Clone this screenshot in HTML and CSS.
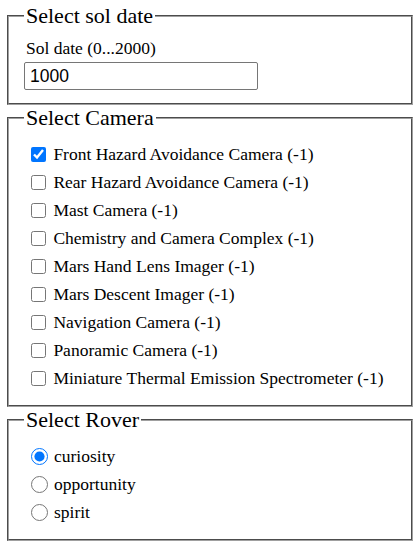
FILE: index.html
```html
<!DOCTYPE html>
<html>
<head>
<meta charset="utf-8">
<link rel="stylesheet" href="styles.css">
</head>
<body>
<fieldset class="box">
  <legend class="title">Select sol date</legend>
  <label class="field-label" for="sol">Sol date (0...2000)</label>
  <input class="text-input" id="sol" type="text" value="1000">
</fieldset>
<fieldset class="box">
  <legend class="title">Select Camera</legend>
  <label class="row"><input class="check" type="checkbox" checked> Front Hazard Avoidance Camera (-1)</label>
  <label class="row"><input class="check" type="checkbox"> Rear Hazard Avoidance Camera (-1)</label>
  <label class="row"><input class="check" type="checkbox"> Mast Camera (-1)</label>
  <label class="row"><input class="check" type="checkbox"> Chemistry and Camera Complex (-1)</label>
  <label class="row"><input class="check" type="checkbox"> Mars Hand Lens Imager (-1)</label>
  <label class="row"><input class="check" type="checkbox"> Mars Descent Imager (-1)</label>
  <label class="row"><input class="check" type="checkbox"> Navigation Camera (-1)</label>
  <label class="row"><input class="check" type="checkbox"> Panoramic Camera (-1)</label>
  <label class="row"><input class="check" type="checkbox"> Miniature Thermal Emission Spectrometer (-1)</label>
</fieldset>
<fieldset class="box">
  <legend class="title">Select Rover</legend>
  <label class="row"><input class="radio" type="radio" name="rover" checked>curiosity</label>
  <label class="row"><input class="radio" type="radio" name="rover">opportunity</label>
  <label class="row"><input class="radio" type="radio" name="rover">spirit</label>
</fieldset>
</body>
</html>
```

FILE: styles.css
```css
body {
  margin: 0;
  padding: 3px 4px 0 7px;
  font-family: "Liberation Serif", serif;
  font-size: 17.5px;
  color: #000;
  background: #fff;
}
.box {
  margin: 0;
  padding: 9px 15px 13px 17px;
  border: 2px groove #a0a0a0;
  min-width: 0;
}
.title {
  font-size: 22px;
  padding: 0 2px;
  margin-left: -2px;
}
.field-label {
  display: block;
  line-height: 20px;
}
.text-input {
  display: block;
  margin: 4px 0 0 -2px;
  box-sizing: border-box;
  width: 234px;
  height: 28px;
  padding: 0 5px;
  border: 1px solid #767676;
  border-radius: 2px;
  font-family: "Liberation Sans", sans-serif;
  font-size: 17.5px;
  color: #000;
}
.row {
  display: flex;
  align-items: center;
  height: 28px;
  white-space: pre;
}
.check {
  width: 15px;
  height: 15px;
  margin: 0 3px 0 5px;
}
.radio {
  width: 17px;
  height: 17px;
  margin: 0 6px 0 5px;
}
```
